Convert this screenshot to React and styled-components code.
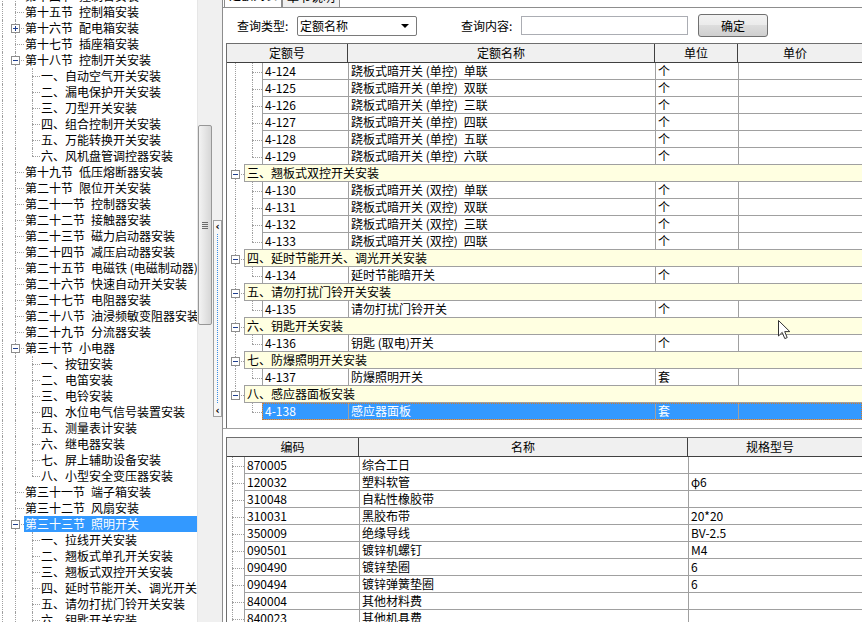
import React from 'react';
import styled, { createGlobalStyle } from 'styled-components';

const GlobalStyle = createGlobalStyle`
  html, body { margin: 0; padding: 0; background: #fff; }
  body {
    font-family: "Noto Sans CJK SC", "Noto Sans", sans-serif;
    font-size: 12px;
    color: #000;
  }
`;

const LINE = '#a0a0a0';
const GRID = '#a0a0a0';
const SP = '\u2002';

const Window = styled.div`
  position: relative;
  display: flex;
  width: 862px;
  height: 622px;
  overflow: hidden;
  background: #fff;
`;

/* ---------- left tree ---------- */

const LeftPane = styled.div`
  display: flex;
  flex: none;
  width: 213px;
  height: 100%;
`;

const TreeArea = styled.div`
  flex: 1;
  overflow: hidden;
  background: #fff;
`;

const TreeList = styled.div`
  margin-top: -12px;
`;

const TreeRow = styled.div`
  display: flex;
  align-items: center;
  height: 16px;
  white-space: pre;
`;

const Branch = styled.span`
  position: relative;
  flex: none;
  align-self: stretch;
  width: ${p => p.$w}px;

  &::before {
    content: '';
    display: ${p => (p.$v ? 'block' : 'none')};
    position: absolute;
    left: ${p => p.$x}px;
    top: 0;
    bottom: ${p => (p.$last ? '50%' : '0')};
    border-left: 1px dotted ${LINE};
  }
  &::after {
    content: '';
    display: ${p => (p.$h ? 'block' : 'none')};
    position: absolute;
    left: ${p => p.$x}px;
    right: 0;
    top: 50%;
    border-top: 1px dotted ${LINE};
  }
`;

const Expander = styled.span`
  position: absolute;
  z-index: 1;
  left: ${p => p.$x - 4}px;
  top: calc(50% - 4px);
  width: 7px;
  height: 7px;
  border: 1px solid #8c8c8c;
  background: #fff;

  &::before {
    content: '';
    position: absolute;
    left: 1px;
    right: 1px;
    top: 3px;
    height: 1px;
    background: #1f3f8f;
  }
  &::after {
    content: '';
    display: ${p => (p.$open ? 'none' : 'block')};
    position: absolute;
    top: 1px;
    bottom: 1px;
    left: 3px;
    width: 1px;
    background: #1f3f8f;
  }
`;

const TreeLabel = styled.span`
  padding: 0 2px 0 1px;
  height: 16px;
  line-height: 16px;
  background: ${p => (p.$sel ? '#3399ff' : 'transparent')};
  color: ${p => (p.$sel ? '#fff' : '#000')};
  ${p => p.$sel && 'flex: 1;'}
`;

const VScroll = styled.div`
  display: flex;
  flex-direction: column;
  flex: none;
  width: 16px;
  padding-top: 125px;
  box-sizing: border-box;
  background: #f0f0f0;
  border-left: 1px solid #e6e6e6;
`;

const Thumb = styled.div`
  display: flex;
  align-items: center;
  justify-content: center;
  width: 14px;
  height: 200px;
  border: 1px solid #979797;
  border-radius: 2px;
  box-sizing: border-box;
  background: linear-gradient(to right, #f3f3f3, #e2e2e2 60%, #d6d6d6);
`;

const Grip = styled.span`
  width: 6px;
  height: 7px;
  background: repeating-linear-gradient(to bottom, #6b6b6b 0 1px, transparent 1px 2px);
`;

/* ---------- splitter ---------- */

const Splitter = styled.div`
  display: flex;
  flex-direction: column;
  flex: none;
  width: 9px;
  padding-top: 220px;
  background: #f0f0f0;
`;

const SplitGrip = styled.div`
  display: flex;
  flex-direction: column;
  align-items: center;
  justify-content: space-between;
  height: 197px;
  border: 1px solid #a0a0a0;
  background: #f7f7f7;
  box-sizing: border-box;
`;

const SplitArrow = styled.span`
  font-family: "DejaVu Sans", sans-serif;
  font-size: 10px;
  font-weight: bold;
  line-height: 11px;
  color: #000;
`;

const SplitDots = styled.span`
  flex: 1;
  width: 0;
  border-left: 1px dotted #3a8ee6;
  margin: 2px 0;
`;

/* ---------- right pane ---------- */

const RightPane = styled.div`
  display: flex;
  flex-direction: column;
  flex: 1;
  min-width: 0;
  border-left: 1px solid #8d8d8d;
  background: #fff;
`;

const TabBar = styled.div`
  display: flex;
  align-items: flex-end;
  height: 7px;
  padding-left: 1px;
  overflow: hidden;
  border-bottom: 1px solid #8d8d8d;
`;

const Tab = styled.span`
  flex: none;
  height: ${p => (p.$active ? 18 : 16)}px;
  padding: 0 4px;
  line-height: 12px;
  border: 1px solid #8d8d8d;
  border-bottom: ${p => (p.$active ? '1px solid #fff' : 'none')};
  background: ${p => (p.$active ? '#fff' : '#f0f0f0')};
  margin-bottom: ${p => (p.$active ? '-1px' : '0')};
`;

const Page = styled.div`
  display: flex;
  flex-direction: column;
  flex: 1;
  min-height: 0;
  padding-left: 3px;
`;

const QueryBar = styled.div`
  display: flex;
  align-items: center;
  height: 35px;
  padding-left: 11px;
  flex: none;
`;

const QLabel = styled.span`
  flex: none;
  width: 60px;
  line-height: 16px;
  margin-left: ${p => p.$ml || 0}px;
`;

const Select = styled.div`
  display: flex;
  align-items: center;
  justify-content: space-between;
  width: 120px;
  height: 20px;
  box-sizing: border-box;
  border: 1px solid #7a7a7a;
  border-radius: 2px;
  padding: 0 7px 0 2px;
  background: #fff;
`;

const Caret = styled.span`
  width: 0;
  height: 0;
  border-left: 4px solid transparent;
  border-right: 4px solid transparent;
  border-top: 4px solid #000;
`;

const Input = styled.div`
  width: 167px;
  height: 19px;
  box-sizing: border-box;
  border: 1px solid #abadb3;
  background: #fff;
`;

const Button = styled.div`
  display: flex;
  align-items: center;
  justify-content: center;
  width: 70px;
  height: 23px;
  margin-left: 10px;
  box-sizing: border-box;
  border: 1px solid #707070;
  border-radius: 3px;
  background: linear-gradient(to bottom, #f2f2f2 0, #ebebeb 50%, #dddddd 50%, #cfcfcf 100%);
`;

const Grid = styled.div`
  flex: none;
  border-top: 1px solid #6e6e6e;
  border-left: 1px solid #6e6e6e;
  height: ${p => p.$h}px;
  box-sizing: border-box;
  overflow: hidden;
  background: #fff;
`;

const HeadRow = styled.div`
  display: flex;
  height: 18px;
  background: #f0f0f0;
  border-bottom: 1px solid #404040;
`;

const HeadCell = styled.div`
  flex: ${p => (p.$w ? 'none' : '1')};
  width: ${p => p.$w || 0}px;
  box-sizing: border-box;
  text-align: center;
  line-height: 18px;
  border-right: ${p => (p.$w ? '1px solid #404040' : 'none')};
  padding-right: ${p => (p.$w ? 0 : 10)}px;
`;

const Row = styled.div`
  display: flex;
  height: 17px;
  white-space: pre;
`;

const Gutter = styled.div`
  display: flex;
  flex: none;
  width: ${p => p.$w}px;
`;

const Cell = styled.div`
  flex: ${p => (p.$w ? 'none' : '1')};
  width: ${p => p.$w || 0}px;
  box-sizing: border-box;
  padding-left: 2px;
  line-height: 16px;
  border-left: 1px solid ${GRID};
  border-bottom: 1px solid ${GRID};
  overflow: hidden;
  background: ${p => (p.$sel ? '#3399ff' : 'transparent')};
  color: ${p => (p.$sel ? '#fff' : '#000')};
`;

const GroupCell = styled.div`
  flex: 1;
  padding-left: 2px;
  line-height: 16px;
  border-left: 1px solid ${GRID};
  border-top: 1px solid ${GRID};
  border-bottom: 1px solid ${GRID};
  margin-top: -1px;
  background: #ffffe1;
`;

const SelRow = styled.div`
  display: flex;
  flex: 1;
  outline: 1px dotted #d07a2a;
  outline-offset: -1px;
`;

const Between = styled.div`
  flex: none;
  height: 8px;
  border-top: 1px solid #a0a0a0;
  margin-left: -3px;
`;

const Cursor = styled.svg`
  position: absolute;
  left: 778px;
  top: 320px;
`;

/* ---------- data ---------- */

const tree = [
  { t: `第十四节${SP}控制台安装`, l: 0 },
  { t: `第十五节${SP}控制箱安装`, l: 0 },
  { t: `第十六节${SP}配电箱安装`, l: 0, e: 'plus' },
  { t: `第十七节${SP}插座箱安装`, l: 0 },
  { t: `第十八节${SP}控制开关安装`, l: 0, e: 'minus' },
  { t: '一、自动空气开关安装', l: 1 },
  { t: '二、漏电保护开关安装', l: 1 },
  { t: '三、刀型开关安装', l: 1 },
  { t: '四、组合控制开关安装', l: 1 },
  { t: '五、万能转换开关安装', l: 1 },
  { t: '六、风机盘管调控器安装', l: 1, last: true },
  { t: `第十九节${SP}低压熔断器安装`, l: 0 },
  { t: `第二十节${SP}限位开关安装`, l: 0 },
  { t: `第二十一节${SP}控制器安装`, l: 0 },
  { t: `第二十二节${SP}接触器安装`, l: 0 },
  { t: `第二十三节${SP}磁力启动器安装`, l: 0 },
  { t: `第二十四节${SP}减压启动器安装`, l: 0 },
  { t: `第二十五节${SP}电磁铁 (电磁制动器)安装`, l: 0 },
  { t: `第二十六节${SP}快速自动开关安装`, l: 0 },
  { t: `第二十七节${SP}电阻器安装`, l: 0 },
  { t: `第二十八节${SP}油浸频敏变阻器安装`, l: 0 },
  { t: `第二十九节${SP}分流器安装`, l: 0 },
  { t: `第三十节${SP}小电器`, l: 0, e: 'minus' },
  { t: '一、按钮安装', l: 1 },
  { t: '二、电笛安装', l: 1 },
  { t: '三、电铃安装', l: 1 },
  { t: '四、水位电气信号装置安装', l: 1 },
  { t: '五、测量表计安装', l: 1 },
  { t: '六、继电器安装', l: 1 },
  { t: '七、屏上辅助设备安装', l: 1 },
  { t: '八、小型安全变压器安装', l: 1, last: true },
  { t: `第三十一节${SP}端子箱安装`, l: 0 },
  { t: `第三十二节${SP}风扇安装`, l: 0 },
  { t: `第三十三节${SP}照明开关`, l: 0, e: 'minus', sel: true },
  { t: '一、拉线开关安装', l: 1 },
  { t: '二、翘板式单孔开关安装', l: 1 },
  { t: '三、翘板式双控开关安装', l: 1 },
  { t: '四、延时节能开关、调光开关安装', l: 1 },
  { t: '五、请勿打扰门铃开关安装', l: 1 },
  { t: '六、钥匙开关安装', l: 1 },
];

const q = (code, name, unit, extra = {}) => ({ g: false, code, name, unit, ...extra });

const quota = [
  q('4-124', `跷板式暗开关 (单控)${SP}单联`, '个'),
  q('4-125', `跷板式暗开关 (单控)${SP}双联`, '个'),
  q('4-126', `跷板式暗开关 (单控)${SP}三联`, '个'),
  q('4-127', `跷板式暗开关 (单控)${SP}四联`, '个'),
  q('4-128', `跷板式暗开关 (单控)${SP}五联`, '个'),
  q('4-129', `跷板式暗开关 (单控)${SP}六联`, '个', { last: true }),
  { g: true, name: '三、翘板式双控开关安装' },
  q('4-130', `跷板式暗开关 (双控)${SP}单联`, '个'),
  q('4-131', `跷板式暗开关 (双控)${SP}双联`, '个'),
  q('4-132', `跷板式暗开关 (双控)${SP}三联`, '个'),
  q('4-133', `跷板式暗开关 (双控)${SP}四联`, '个', { last: true }),
  { g: true, name: '四、延时节能开关、调光开关安装' },
  q('4-134', '延时节能暗开关', '个', { last: true }),
  { g: true, name: '五、请勿打扰门铃开关安装' },
  q('4-135', '请勿打扰门铃开关', '个', { last: true }),
  { g: true, name: '六、钥匙开关安装' },
  q('4-136', '钥匙 (取电)开关', '个', { last: true }),
  { g: true, name: '七、防爆照明开关安装' },
  q('4-137', '防爆照明开关', '套', { last: true }),
  { g: true, name: '八、感应器面板安装', end: true },
  q('4-138', '感应器面板', '套', { last: true, end: true, sel: true }),
];

const materials = [
  ['870005', '综合工日', ''],
  ['120032', '塑料软管', 'φ6'],
  ['310048', '自粘性橡胶带', ''],
  ['310031', '黑胶布带', '20*20'],
  ['350009', '绝缘导线', 'BV-2.5'],
  ['090501', '镀锌机螺钉', 'M4'],
  ['090490', '镀锌垫圈', '6'],
  ['090494', '镀锌弹簧垫圈', '6'],
  ['840004', '其他材料费', ''],
  ['840023', '其他机具费', ''],
];

/* ---------- parts ---------- */

const TreeItem = ({ item }) => (
  <TreeRow>
    <Branch $w={9} $x={2} $v />
    {item.l === 0 ? (
      <Branch $w={15} $x={6} $v $h>
        {item.e && <Expander $x={6} $open={item.e === 'minus'} />}
      </Branch>
    ) : (
      <>
        <Branch $w={15} $x={6} $v />
        <Branch $w={16} $x={8} $v $h $last={item.last} />
      </>
    )}
    <TreeLabel $sel={item.sel}>{item.t}</TreeLabel>
  </TreeRow>
);

const QuotaRow = ({ r }) =>
  r.g ? (
    <Row>
      <Gutter $w={17}>
        <Branch $w={17} $x={8} $v $h $last={r.end}>
          <Expander $x={8} $open />
        </Branch>
      </Gutter>
      <GroupCell>{r.name}</GroupCell>
    </Row>
  ) : (
    <Row>
      <Gutter $w={35}>
        <Branch $w={17} $x={8} $v={!r.end} />
        <Branch $w={18} $x={8} $v $h $last={r.last} />
      </Gutter>
      {r.sel ? (
        <SelRow>
          <Cell $w={86} $sel>{r.code}</Cell>
          <Cell $w={307} $sel>{r.name}</Cell>
          <Cell $w={83} $sel>{r.unit}</Cell>
          <Cell $sel />
        </SelRow>
      ) : (
        <>
          <Cell $w={86}>{r.code}</Cell>
          <Cell $w={307}>{r.name}</Cell>
          <Cell $w={83}>{r.unit}</Cell>
          <Cell />
        </>
      )}
    </Row>
  );

export default function App() {
  return (
    <Window>
      <GlobalStyle />
      <LeftPane>
        <TreeArea>
          <TreeList>
            {tree.map((it, i) => (
              <TreeItem key={i} item={it} />
            ))}
          </TreeList>
        </TreeArea>
        <VScroll>
          <Thumb>
            <Grip />
          </Thumb>
        </VScroll>
      </LeftPane>

      <Splitter>
        <SplitGrip>
          <SplitArrow>‹</SplitArrow>
          <SplitDots />
          <SplitArrow>‹</SplitArrow>
        </SplitGrip>
      </Splitter>

      <RightPane>
        <TabBar>
          <Tab $active>定额列表</Tab>
          <Tab>章节说明</Tab>
        </TabBar>
        <Page>
          <QueryBar>
            <QLabel>查询类型:</QLabel>
            <Select>
              <span>定额名称</span>
              <Caret />
            </Select>
            <QLabel $ml={44}>查询内容:</QLabel>
            <Input />
            <Button>确定</Button>
          </QueryBar>

          <Grid $h={385}>
            <HeadRow>
              <HeadCell $w={121}>定额号</HeadCell>
              <HeadCell $w={307}>定额名称</HeadCell>
              <HeadCell $w={83}>单位</HeadCell>
              <HeadCell>单价</HeadCell>
            </HeadRow>
            {quota.map((r, i) => (
              <QuotaRow key={i} r={r} />
            ))}
          </Grid>

          <Between />

          <Grid $h={200}>
            <HeadRow>
              <HeadCell $w={132}>编码</HeadCell>
              <HeadCell $w={329}>名称</HeadCell>
              <HeadCell>规格型号</HeadCell>
            </HeadRow>
            {materials.map((m, i) => (
              <Row key={i}>
                <Gutter $w={17}>
                  <Branch $w={17} $x={5} $v $h />
                </Gutter>
                <Cell $w={115}>{m[0]}</Cell>
                <Cell $w={329}>{m[1]}</Cell>
                <Cell>{m[2]}</Cell>
              </Row>
            ))}
          </Grid>
        </Page>
      </RightPane>

      <Cursor width="13" height="20" viewBox="0 0 13 20">
        <path d="M0.5 0.5 L0.5 16 L4.2 12.4 L6.8 18.6 L9.2 17.6 L6.7 11.6 L11.8 11.6 Z" fill="#fff" stroke="#333" strokeWidth="1" />
      </Cursor>
    </Window>
  );
}
